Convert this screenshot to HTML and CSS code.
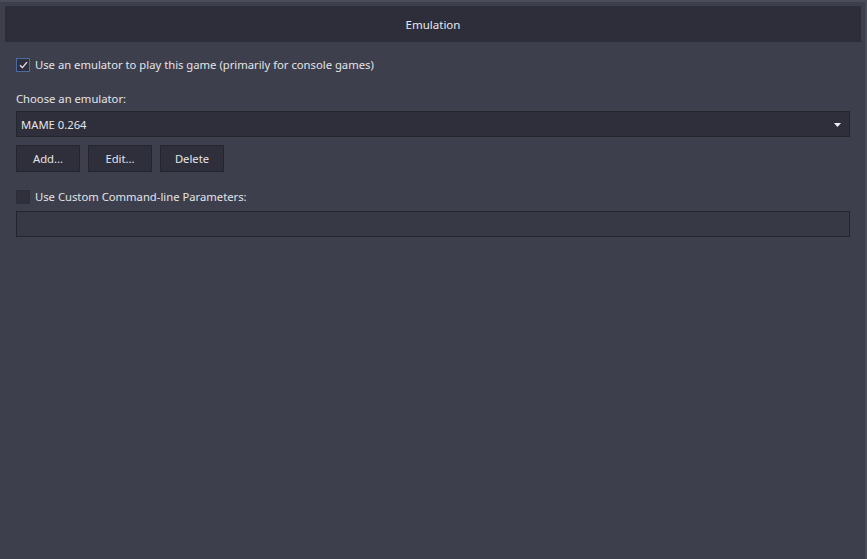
FILE: index.html
```html
<!DOCTYPE html>
<html>
<head>
<meta charset="utf-8">
<link rel="stylesheet" href="styles.css">
</head>
<body>
<div class="window">
  <div class="header">Emulation</div>
  <div class="content">
    <label class="check-row first">
      <span class="checkbox checked">
        <svg width="9" height="8" viewBox="0 0 9 8"><path d="M1 4.2 L3.4 6.6 L8 1.2" fill="none" stroke="#e8e8ec" stroke-width="1.3"/></svg>
      </span>
      <span class="check-label">Use an emulator to play this game (primarily for console games)</span>
    </label>
    <div class="field-label">Choose an emulator:</div>
    <div class="select">
      <span>MAME 0.264</span>
      <svg class="arrow" width="7" height="4" viewBox="0 0 7 4"><path d="M0 0 H7 L3.5 4 Z" fill="#f0f0f0"/></svg>
    </div>
    <div class="buttons">
      <button class="btn">Add...</button>
      <button class="btn">Edit...</button>
      <button class="btn">Delete</button>
    </div>
    <label class="check-row second">
      <span class="checkbox"></span>
      <span class="check-label">Use Custom Command-line Parameters:</span>
    </label>
    <div class="textbox"></div>
  </div>
</div>
</body>
</html>
```
FILE: styles.css
```css
* { box-sizing: border-box; }
html, body { margin: 0; padding: 0; }
body {
  width: 867px;
  height: 559px;
  overflow: hidden;
  background: #3d3f4c;
  font-family: "Noto Sans", "Open Sans", sans-serif;
  font-size: 11.25px;
  color: #e4e4e8;
}
.window {
  height: 559px;
  border-top: 2px solid #4a4c59;
  border-right: 2px solid #4a4c59;
  padding: 4px 4px 0 5px;
}
.header {
  height: 36px;
  background: #2d2e3a;
  display: flex;
  align-items: center;
  justify-content: center;
  color: #e8e8ec;
  font-size: 11.5px;
}
.content {
  padding: 16px 11px 0 11px;
  display: flex;
  flex-direction: column;
}
.check-row {
  display: flex;
  align-items: center;
  gap: 5px;
  height: 14px;
}
.checkbox {
  width: 14px;
  height: 14px;
  border: 1px solid #2c2d38;
  background: #2f303c;
  display: flex;
  align-items: center;
  justify-content: center;
}
.checkbox.checked {
  border-color: #4b6ba4;
}
.check-label { line-height: 14px; }
.field-label {
  margin-top: 19px;
  line-height: 16px;
}
.select {
  margin-top: 4px;
  height: 26px;
  background: #2e2f3b;
  border: 1px solid #24252e;
  display: flex;
  align-items: center;
  justify-content: space-between;
  padding: 0 8px 0 4px;
}
.arrow { margin-top: 1px; }
.buttons {
  margin-top: 8px;
  display: flex;
  gap: 8px;
}
.btn {
  width: 64px;
  height: 27px;
  background: #2e2f3b;
  border: 1px solid #24252e;
  color: #e4e4e8;
  font-family: inherit;
  font-size: 11.25px;
  padding: 0;
}
.check-row.second { margin-top: 18px; }
.textbox {
  margin-top: 7px;
  height: 26px;
  background: #373945;
  border: 1px solid #24252e;
}
```
